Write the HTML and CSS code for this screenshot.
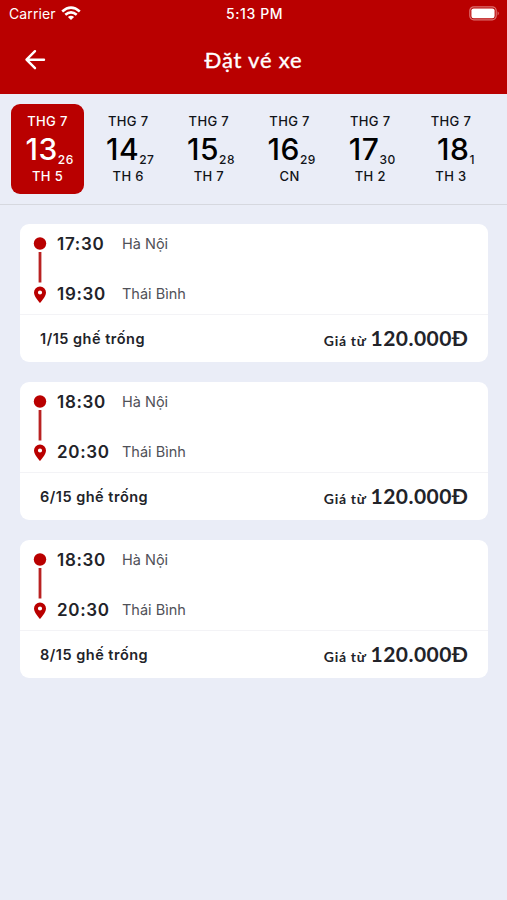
FILE: index.html
```html
<!DOCTYPE html>
<html lang="vi">
<head>
<meta charset="utf-8">
<title>Đặt vé xe</title>
<link rel="stylesheet" href="styles.css">
</head>
<body>
<header class="header">
  <div class="status">
    <div class="status-left">
      <span class="carrier">Carrier</span>
      <svg class="wifi" width="20" height="15" viewBox="0 0 20 15" fill="none" stroke="#fff" stroke-width="2.6"><path d="M1.2 5.5Q10-2.2 18.8 5.5M4.3 8.8Q10 4 15.7 8.8"/><path d="M6.9 10.9Q10 8.4 13.1 10.9L10 14z" fill="#fff" stroke="none"/></svg>
    </div>
    <span class="clock">5:13 PM</span>
    <svg class="battery" width="31" height="15" viewBox="0 0 31 15"><rect x=".8" y=".8" width="26.4" height="13" rx="4" fill="none" stroke="#dc7070" stroke-width="1.2"/><rect x="2.4" y="2.4" width="23.2" height="9.8" rx="2.2" fill="#fff"/><path d="M28.6 5.2Q31 7.3 28.6 9.4z" fill="#dc7070"/></svg>
  </div>
  <div class="nav">
    <svg class="back" width="22" height="22" viewBox="0 0 22 22" fill="none" stroke="#fff" stroke-width="2.4" stroke-linecap="round" stroke-linejoin="round"><path d="M20 10.7H3M11 2.2L2.5 10.7L11 19.2"/></svg>
    <h1 class="title">Đặt vé xe</h1>
  </div>
</header>
<nav class="dates">
  <div class="date active"><span class="label">THG 7</span><div class="num"><b>13</b><i>26</i></div><span class="label">TH 5</span></div>
  <div class="date"><span class="label">THG 7</span><div class="num"><b>14</b><i>27</i></div><span class="label">TH 6</span></div>
  <div class="date"><span class="label">THG 7</span><div class="num"><b>15</b><i>28</i></div><span class="label">TH 7</span></div>
  <div class="date"><span class="label">THG 7</span><div class="num"><b>16</b><i>29</i></div><span class="label">CN</span></div>
  <div class="date"><span class="label">THG 7</span><div class="num"><b>17</b><i>30</i></div><span class="label">TH 2</span></div>
  <div class="date"><span class="label">THG 7</span><div class="num short"><b>18</b><i>1</i></div><span class="label">TH 3</span></div>
</nav>
<main class="trips">
  <article class="trip">
    <div class="route">
      <svg class="track" width="14" height="68" viewBox="0 0 14 68"><circle cx="7" cy="7.5" r="6.2" fill="#b90000"/><path d="M7 16V46.500" stroke="#b92222" stroke-width="2.8"/><path fill="#b90000" fill-rule="evenodd" d="M7 50.500a6 6 0 0 0-6 6c0 4.300 6 10.500 6 10.500S13 60.800 13 56.500a6 6 0 0 0-6-6zm0 3.900a2.100 2.100 0 1 1 0 4.200a2.100 2.100 0 0 1 0-4.200z"/></svg>
      <div class="stops">
        <div class="stop"><span class="time">17:30</span><span class="place">Hà Nội</span></div>
        <div class="stop"><span class="time">19:30</span><span class="place">Thái Bình</span></div>
      </div>
    </div>
    <div class="foot"><span class="seats">1/15 ghế trống</span><div class="price"><span class="from">Giá từ</span><span class="amount">120.000Đ</span></div></div>
  </article>
  <article class="trip">
    <div class="route">
      <svg class="track" width="14" height="68" viewBox="0 0 14 68"><circle cx="7" cy="7.5" r="6.2" fill="#b90000"/><path d="M7 16V46.500" stroke="#b92222" stroke-width="2.8"/><path fill="#b90000" fill-rule="evenodd" d="M7 50.500a6 6 0 0 0-6 6c0 4.300 6 10.500 6 10.500S13 60.800 13 56.500a6 6 0 0 0-6-6zm0 3.900a2.100 2.100 0 1 1 0 4.200a2.100 2.100 0 0 1 0-4.200z"/></svg>
      <div class="stops">
        <div class="stop"><span class="time">18:30</span><span class="place">Hà Nội</span></div>
        <div class="stop"><span class="time">20:30</span><span class="place">Thái Bình</span></div>
      </div>
    </div>
    <div class="foot"><span class="seats">6/15 ghế trống</span><div class="price"><span class="from">Giá từ</span><span class="amount">120.000Đ</span></div></div>
  </article>
  <article class="trip">
    <div class="route">
      <svg class="track" width="14" height="68" viewBox="0 0 14 68"><circle cx="7" cy="7.5" r="6.2" fill="#b90000"/><path d="M7 16V46.500" stroke="#b92222" stroke-width="2.8"/><path fill="#b90000" fill-rule="evenodd" d="M7 50.500a6 6 0 0 0-6 6c0 4.300 6 10.500 6 10.500S13 60.800 13 56.500a6 6 0 0 0-6-6zm0 3.900a2.100 2.100 0 1 1 0 4.200a2.100 2.100 0 0 1 0-4.200z"/></svg>
      <div class="stops">
        <div class="stop"><span class="time">18:30</span><span class="place">Hà Nội</span></div>
        <div class="stop"><span class="time">20:30</span><span class="place">Thái Bình</span></div>
      </div>
    </div>
    <div class="foot"><span class="seats">8/15 ghế trống</span><div class="price"><span class="from">Giá từ</span><span class="amount">120.000Đ</span></div></div>
  </article>
</main>
</body>
</html>
```
FILE: styles.css
```css
* { box-sizing: border-box; }
body {
  margin: 0;
  min-height: 100vh;
  background: #eaedf7;
  color: #222329;
  font-family: Inter, "Liberation Sans", sans-serif;
}
.header { height: 94px; background: #b90000; color: #fff; }
.status {
  height: 27px;
  padding: 0 7px 0 9px;
  display: grid;
  grid-template-columns: 1fr auto 1fr;
  align-items: center;
  font-size: 14px;
}
.status-left { display: flex; align-items: center; gap: 5px; }
.carrier { letter-spacing: 0.1px; }
.clock { font-weight: 550; font-size: 14px; letter-spacing: 0.6px; }
.battery { justify-self: end; }
.nav {
  height: 67px;
  padding: 0 24px 2px;
  display: grid;
  grid-template-columns: 22px 1fr 22px;
  align-items: center;
}
.title {
  margin: 0;
  text-align: center;
  font: 400 22px/28px Lato, sans-serif;
  letter-spacing: 0.8px;
  -webkit-text-stroke: 0.35px currentColor;
}
.dates {
  height: 111px;
  padding: 10px 0 0 11px;
  display: grid;
  grid-template-columns: repeat(6, 73px);
  grid-auto-rows: 90px;
  column-gap: 7.7px;
  border-bottom: 1px solid #d6d8df;
}
.date {
  border-radius: 9px;
  padding-top: 9px;
  display: flex;
  flex-direction: column;
  align-items: center;
  color: #111318;
}
.date.active,
.date.active .num b { color: #fff; }
.date.active { background: #b90000; }
.label { font-size: 13px; line-height: 16px; font-weight: 500; letter-spacing: 0.35px; }
.num {
  height: 39px;
  padding-left: 4px;
  display: flex;
  align-items: baseline;
  line-height: 40px;
}
.num.short { padding-left: 10px; }
.num b { font-size: 30px; font-weight: 450; letter-spacing: 0.6px; color: #000; }
.num i {
  font-size: 12px;
  font-style: normal;
  font-weight: 450;
  letter-spacing: 0.4px;
  align-self: flex-end;
  line-height: 16px;
}
.trips { padding: 19px 19px 0 20px; display: grid; gap: 19.8px; }
.trip { height: 138px; border-radius: 9px; background: #fff; }
.route { height: 91px; padding: 12px 13px; display: flex; gap: 10px; border-bottom: 1px solid #f3f3f6; }
.stops { display: grid; grid-template-rows: 16px 16px; row-gap: 34px; }
.stop { display: grid; grid-template-columns: 65px auto; align-items: center; line-height: 16px; }
.time { font-size: 17px; font-weight: 600; letter-spacing: 0.7px; }
.place { font-size: 14.5px; color: #505158; }
.foot { height: 47px; padding: 0 20px; display: flex; align-items: center; justify-content: space-between; }
.seats { font-size: 14.5px; font-weight: 600; letter-spacing: 0.5px; }
.price { display: flex; align-items: baseline; gap: 4px; padding-bottom: 2px; font-family: Lato, sans-serif; font-weight: 700; }
.from { font-size: 14px; letter-spacing: 0.7px; }
.amount { font-size: 21px; letter-spacing: 0.45px; margin-right: -0.45px; }
```
